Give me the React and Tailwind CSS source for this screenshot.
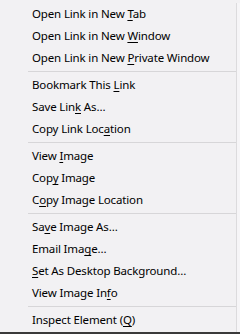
import React from 'react';

// each label is split around its access key: [before, key, after]
const groups = [
  [
    ['Open Link in New ', 'T', 'ab'],
    ['Open Link in New ', 'W', 'indow'],
    ['Open Link in New ', 'P', 'rivate Window'],
  ],
  [
    ['Bookmark This ', 'L', 'ink'],
    ['Save Lin', 'k', ' As…'],
    ['Copy Link Loc', 'a', 'tion'],
  ],
  [
    ['View ', 'I', 'mage'],
    ['Cop', 'y', ' Image'],
    ['C', 'o', 'py Image Location'],
  ],
  [
    ['Sa', 'v', 'e Image As…'],
    ['Email Ima', 'g', 'e…'],
    ['', 'S', 'et As Desktop Background…'],
    ['View Image In', 'f', 'o'],
  ],
  [['Inspect Element (', 'Q', ')']],
];

function MenuItem({ label }) {
  const [before, key, after] = label;
  return (
    <div className="h-[22px] flex items-center pl-[32px] text-[11.5px] tracking-[-0.15px] text-[#000] whitespace-pre">
      <span>
        {before}
        <span className="underline underline-offset-[2px] decoration-1">{key}</span>
        {after}
      </span>
    </div>
  );
}

export default function App() {
  return (
    <div className="w-[240px] h-[334px] bg-[#3a3a3a] flex flex-col overflow-hidden">
      <div
        className="w-[240px] h-[332px] bg-[#f2f1f3] flex pt-[3px]"
        style={{ fontFamily: '"Noto Sans", "Open Sans", sans-serif' }}
      >
        <div className="w-[237px] border-r border-[#dcdbdd] flex flex-col">
          {groups.map((items, gi) => (
            <div key={gi}>
              {gi > 0 && (
                <div className="py-[2px] pl-[28px]">
                  <div className="h-px bg-[#d7d6d8]" />
                </div>
              )}
              {items.map((label, i) => (
                <MenuItem key={i} label={label} />
              ))}
            </div>
          ))}
        </div>
        <div className="flex-1 bg-[#f6f5f7]" />
      </div>
    </div>
  );
}
